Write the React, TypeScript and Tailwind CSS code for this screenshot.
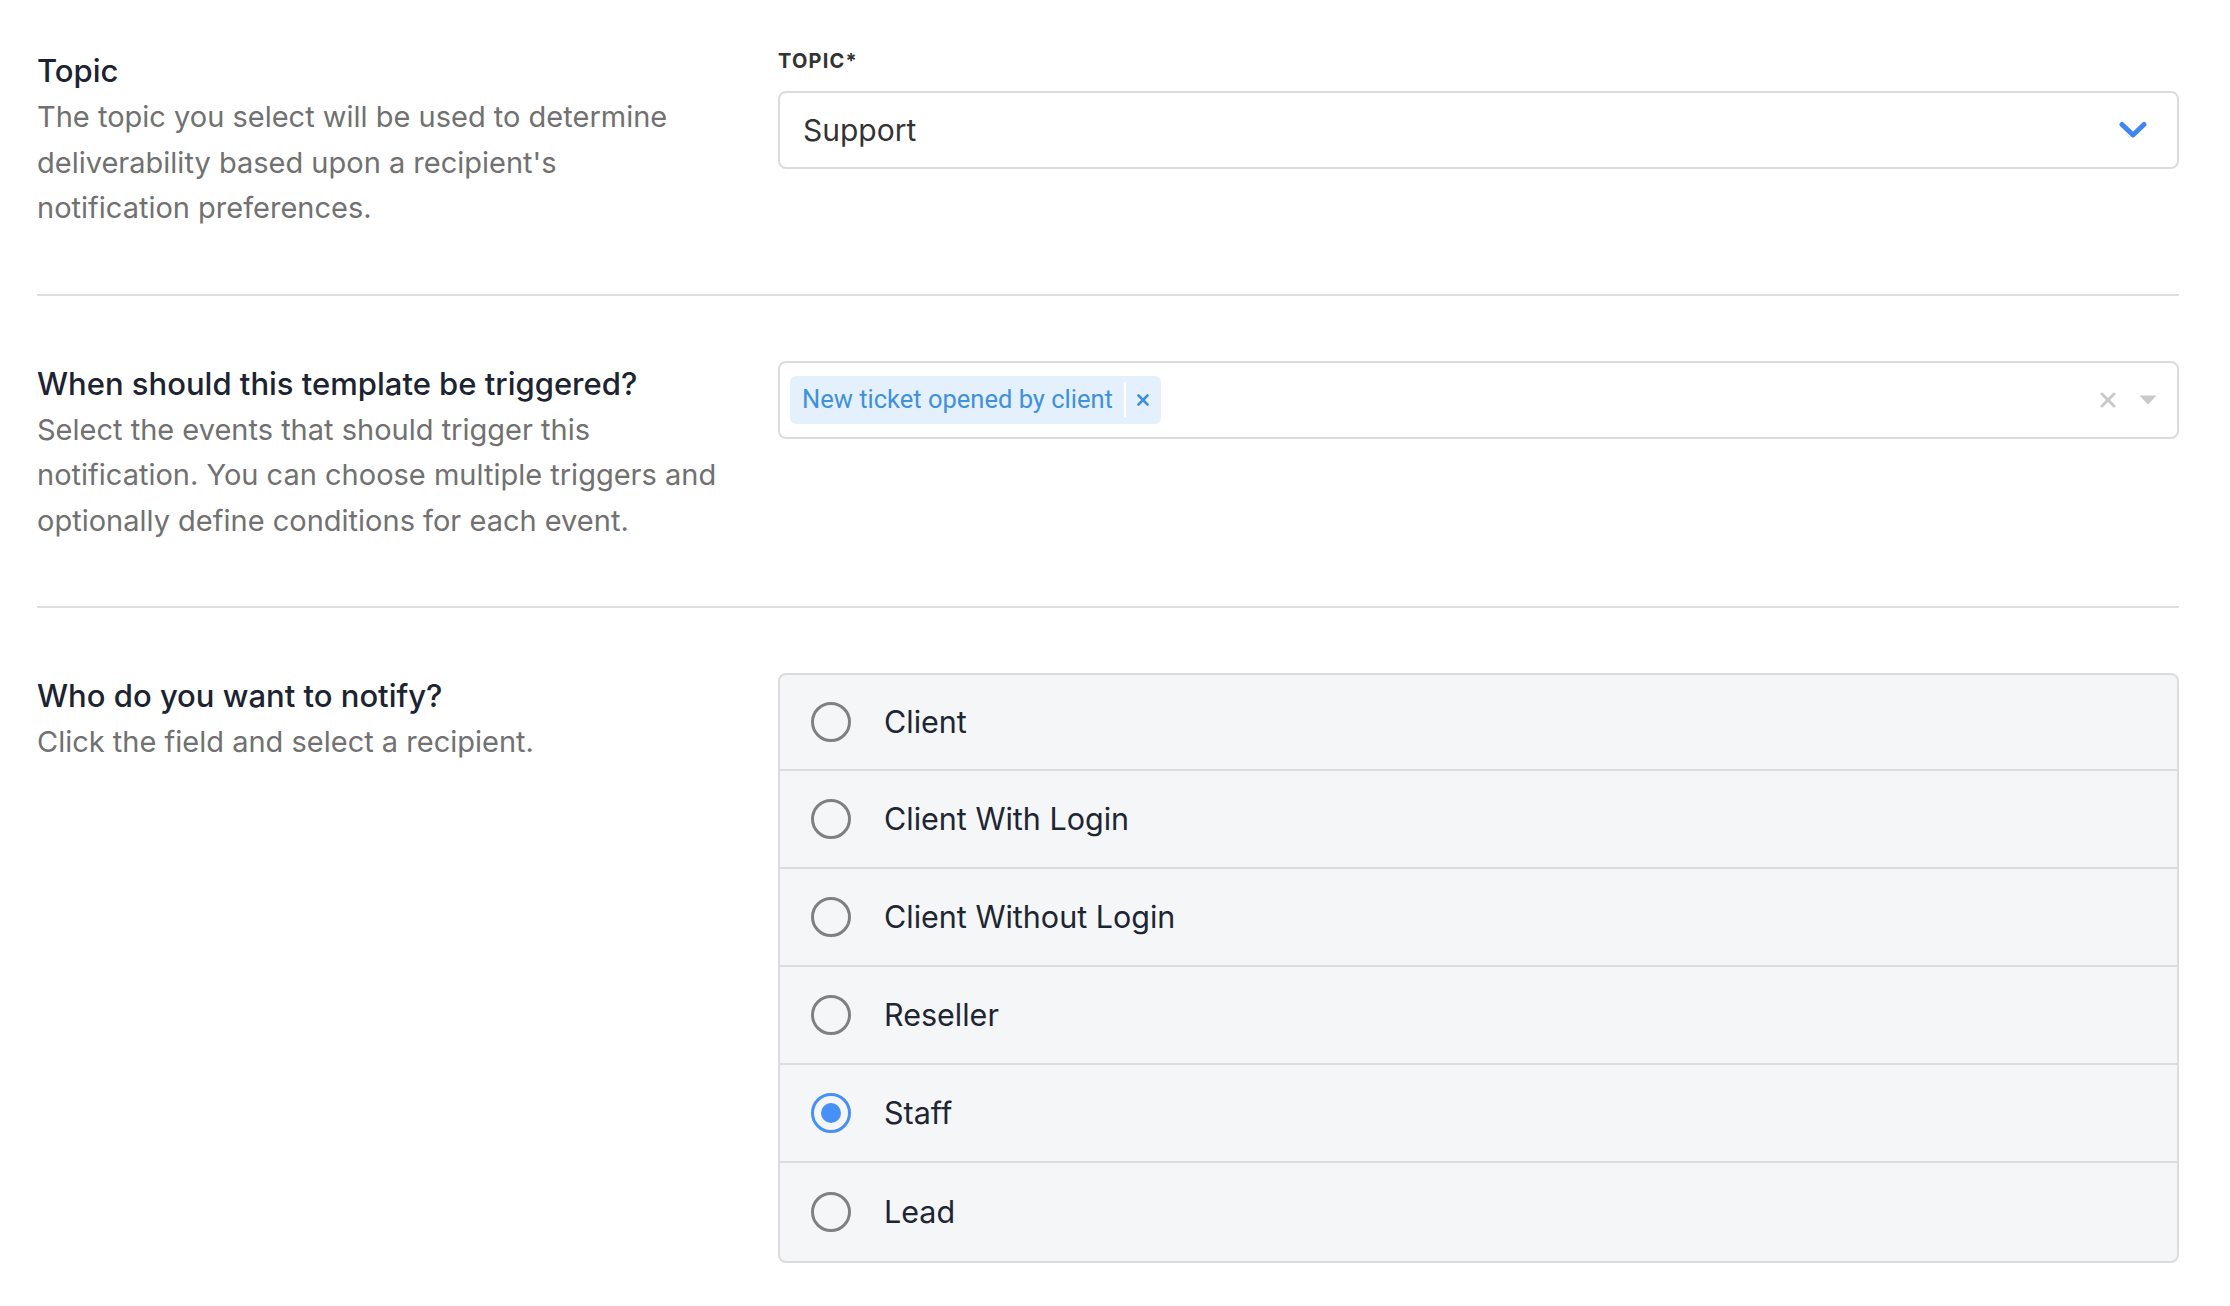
import React, { useState } from 'react'

/**
 * A single recipient option in the radio list
 */
interface RecipientOption {
  readonly id: string;
  readonly label: string;
}

const RECIPIENTS: RecipientOption[] = [
  { id: 'client', label: 'Client' },
  { id: 'client-login', label: 'Client With Login' },
  { id: 'client-no-login', label: 'Client Without Login' },
  { id: 'reseller', label: 'Reseller' },
  { id: 'staff', label: 'Staff' },
  { id: 'lead', label: 'Lead' },
]

/**
 * Left side heading + helper text for a settings row
 */
function SectionIntro({ title, narrow, children }: { title: string; narrow?: boolean; children: React.ReactNode }): React.JSX.Element {
  return (
    <div className="pr-[46px]">
      <h3 className="text-[31px] leading-[46px] font-medium text-[#1c2331]">{title}</h3>
      <p className={`text-[29px] leading-[45.5px] text-[#717171] ${narrow ? 'max-w-[660px]' : ''}`}>{children}</p>
    </div>
  )
}

export default function App(): React.JSX.Element {
  const [recipient, setRecipient] = useState<string>('staff')

  return (
    <div className="min-h-screen bg-white font-['Inter','Liberation_Sans',sans-serif]">
      <div className="ml-[37px] w-[2142px]">
        {/* Topic */}
        <section className="grid grid-cols-[741px_1fr] pt-[48px] pb-[63px] border-b-2 border-[#dedede]">
          <SectionIntro title="Topic" narrow>
            The topic you select will be used to determine deliverability based upon a recipient's notification preferences.
          </SectionIntro>
          <div>
            <label className="block text-[20px] leading-[26px] font-bold tracking-[0.06em] text-[#333]">TOPIC*</label>
            <div className="mt-[17px] flex h-[78px] items-center justify-between rounded-lg border-2 border-[#dcdcdc] bg-white pl-[23px] pr-[30px]">
              <span className="text-[30px] text-[#333]">Support</span>
              <svg width="28" height="18" viewBox="0 0 28 18" fill="none">
                <path d="M3 3.5L14 14L25 3.5" stroke="#3f86f2" strokeWidth="5" strokeLinecap="round" strokeLinejoin="round" />
              </svg>
            </div>
          </div>
        </section>

        {/* Triggers */}
        <section className="grid grid-cols-[741px_1fr] pt-[65px] pb-[63px] border-b-2 border-[#dedede]">
          <SectionIntro title="When should this template be triggered?">
            Select the events that should trigger this notification. You can choose multiple triggers and optionally define conditions for each event.
          </SectionIntro>
          <div>
            <div className="flex h-[78px] items-center justify-between rounded-lg border-2 border-[#dcdcdc] bg-white pl-[10px] pr-[20px]">
              <div className="flex h-[48px] items-center rounded-md bg-[#e4f1fc] font-['Roboto',sans-serif] text-[25.5px] text-[#4190dc]">
                <span className="pl-[12px] pr-[11px]">New ticket opened by client</span>
                <span className="h-[35px] w-[2px] bg-white" />
                <span className="flex w-[35px] justify-center">
                  <svg width="12" height="12" viewBox="0 0 12 12">
                    <path d="M1.5 1.5L10.5 10.5M10.5 1.5L1.5 10.5" stroke="#4190dc" strokeWidth="2.6" strokeLinecap="round" />
                  </svg>
                </span>
              </div>
              <div className="flex items-center gap-[23px]">
                <svg width="16" height="16" viewBox="0 0 16 16">
                  <path d="M2 2L14 14M14 2L2 14" stroke="#c9c9c9" strokeWidth="3" strokeLinecap="round" />
                </svg>
                <svg width="18" height="10" viewBox="0 0 18 10">
                  <path d="M0.5 0.5H17.5L9 9.5Z" fill="#c9c9c9" />
                </svg>
              </div>
            </div>
          </div>
        </section>

        {/* Recipients */}
        <section className="grid grid-cols-[741px_1fr] pt-[65px] pb-[40px]">
          <SectionIntro title="Who do you want to notify?">
            Click the field and select a recipient.
          </SectionIntro>
          <div className="overflow-hidden rounded-lg border-2 border-[#dcdcdf] bg-[#f5f6f8] divide-y-2 divide-[#dcdcdf]">
            {RECIPIENTS.map((option) => {
              const checked = recipient === option.id
              return (
                <label
                  key={option.id}
                  onClick={() => setRecipient(option.id)}
                  className="flex h-[98px] first:h-[96px] cursor-pointer items-center pl-[31px]"
                >
                  <span
                    className={`flex h-[40px] w-[40px] items-center justify-center rounded-full border-[3px] ${
                      checked ? 'border-[#4790f5]' : 'border-[#808080]'
                    }`}
                  >
                    {checked && <span className="h-[20px] w-[20px] rounded-full bg-[#4790f5]" />}
                  </span>
                  <span className="ml-[33px] text-[30.5px] text-[#1e2533]">{option.label}</span>
                </label>
              )
            })}
          </div>
        </section>
      </div>
    </div>
  )
}
